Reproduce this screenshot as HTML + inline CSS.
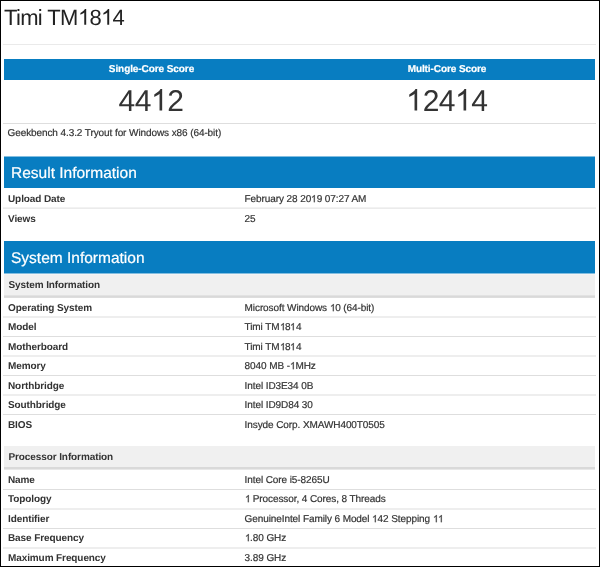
<!DOCTYPE html>
<html><head><meta charset="utf-8"><style>
html,body{margin:0;padding:0;width:600px;height:567px;overflow:hidden;background:#fff}
body{font-family:"Liberation Sans",sans-serif}
#w{position:relative;width:600px;height:567px;will-change:transform}
.t{position:absolute;white-space:nowrap;text-rendering:geometricPrecision}
.s{-webkit-text-stroke:0.2px}
.one{display:inline-block;height:0;position:relative}
.one svg{position:absolute;left:0;bottom:0;overflow:visible;fill:currentColor}
.r{position:absolute}
</style></head><body><div id="w">
<div class="t" style="top:7px;font-size:22px;line-height:22px;color:#222;letter-spacing:-0.62px;left:3.9px;">Timi TM<span class="one" style="width:11.615px"><svg viewBox="0 0 1139 1472" style="width:12.235px;height:15.812px"><path d="M763 1472H583V325Q518 387 412 449Q307 511 223 542V368Q374 297 487 196Q600 95 647 0H763Z"/></svg></span>8<span class="one" style="width:11.615px"><svg viewBox="0 0 1139 1472" style="width:12.235px;height:15.812px"><path d="M763 1472H583V325Q518 387 412 449Q307 511 223 542V368Q374 297 487 196Q600 95 647 0H763Z"/></svg></span>4</div>
<div class="r" style="left:3px;top:44px;width:593px;height:1px;background:rgb(234,234,234)"></div>
<div class="r" style="left:4px;top:59px;width:591px;height:21px;background:rgb(8,125,193)"></div>
<div class="t s" style="top:65px;font-size:10px;line-height:10px;color:#fff;font-weight:bold;letter-spacing:-0.08px;left:1.5px;width:300px;text-align:center;">Single-Core Score</div>
<div class="t s" style="top:65px;font-size:10px;line-height:10px;color:#fff;font-weight:bold;letter-spacing:-0.08px;left:297px;width:300px;text-align:center;">Multi-Core Score</div>
<div class="t" style="top:87px;font-size:30px;line-height:30px;color:#333;letter-spacing:-0.44px;left:1px;width:300px;text-align:center;">44<span class="one" style="width:16.245px"><svg viewBox="0 0 1139 1472" style="width:16.685px;height:21.562px"><path d="M763 1472H583V325Q518 387 412 449Q307 511 223 542V368Q374 297 487 196Q600 95 647 0H763Z"/></svg></span>2</div>
<div class="t" style="top:87px;font-size:30px;line-height:30px;color:#333;letter-spacing:-0.44px;left:297px;width:300px;text-align:center;"><span class="one" style="width:16.245px"><svg viewBox="0 0 1139 1472" style="width:16.685px;height:21.562px"><path d="M763 1472H583V325Q518 387 412 449Q307 511 223 542V368Q374 297 487 196Q600 95 647 0H763Z"/></svg></span>24<span class="one" style="width:16.245px"><svg viewBox="0 0 1139 1472" style="width:16.685px;height:21.562px"><path d="M763 1472H583V325Q518 387 412 449Q307 511 223 542V368Q374 297 487 196Q600 95 647 0H763Z"/></svg></span>4</div>
<div class="r" style="left:3px;top:123px;width:593px;height:1px;background:rgb(222,222,222)"></div>
<div class="t s" style="top:129px;font-size:10px;line-height:10px;color:#333;letter-spacing:-0.09px;left:7.5px;">Geekbench 4.3.2 Tryout for Windows x86 (64-bit)</div>
<div class="r" style="left:4px;top:156px;width:591px;height:1px;background:rgba(8,125,193,0.5)"></div>
<div class="r" style="left:4px;top:157px;width:591px;height:31px;background:rgb(8,125,193)"></div>
<div class="t s" style="top:166px;font-size:15.5px;line-height:15.5px;color:#fff;left:11px;">Result Information</div>
<div class="t" style="top:195px;font-size:10px;line-height:10px;color:#333;font-weight:bold;letter-spacing:-0.1px;left:8px;">Upload Date</div>
<div class="t s" style="top:195px;font-size:10px;line-height:10px;color:#333;letter-spacing:-0.09px;left:244.6px;">February 28 20<span class="one" style="width:5.472px"><svg viewBox="0 0 1139 1472" style="width:5.562px;height:7.188px"><path stroke="currentColor" stroke-width="41.0" d="M763 1472H583V325Q518 387 412 449Q307 511 223 542V368Q374 297 487 196Q600 95 647 0H763Z"/></svg></span>9 07:27 AM</div>
<div class="r" style="left:3px;top:207px;width:593px;height:1px;background:rgba(222,222,222,0.4)"></div>
<div class="r" style="left:3px;top:208px;width:593px;height:1px;background:rgba(222,222,222,0.6)"></div>
<div class="t" style="top:215px;font-size:10px;line-height:10px;color:#333;font-weight:bold;letter-spacing:-0.1px;left:8px;">Views</div>
<div class="t s" style="top:215px;font-size:10px;line-height:10px;color:#333;letter-spacing:-0.09px;left:244.6px;">25</div>
<div class="r" style="left:4px;top:241px;width:591px;height:32px;background:rgb(8,125,193)"></div>
<div class="r" style="left:4px;top:273px;width:591px;height:1px;background:rgba(8,125,193,0.5)"></div>
<div class="t s" style="top:251px;font-size:15.5px;line-height:15.5px;color:#fff;left:11px;">System Information</div>
<div class="r" style="left:4px;top:274px;width:591px;height:1px;background:rgba(240,240,240,0.7)"></div>
<div class="r" style="left:4px;top:275px;width:591px;height:20px;background:rgb(240,240,240)"></div>
<div class="r" style="left:4px;top:295px;width:591px;height:1px;background:rgba(240,240,240,0.3)"></div>
<div class="r" style="left:4px;top:295px;width:591px;height:1px;background:rgba(217,217,217,0.7)"></div>
<div class="r" style="left:4px;top:296px;width:591px;height:1px;background:rgb(217,217,217)"></div>
<div class="r" style="left:4px;top:297px;width:591px;height:1px;background:rgba(217,217,217,0.9)"></div>
<div class="t" style="top:281px;font-size:10px;line-height:10px;color:#333;font-weight:bold;letter-spacing:-0.1px;left:8.5px;">System Information</div>
<div class="t" style="top:304px;font-size:10px;line-height:10px;color:#333;font-weight:bold;letter-spacing:-0.1px;left:8px;">Operating System</div>
<div class="t s" style="top:304px;font-size:10px;line-height:10px;color:#333;letter-spacing:-0.09px;left:244.6px;">Microsoft Windows <span class="one" style="width:5.472px"><svg viewBox="0 0 1139 1472" style="width:5.562px;height:7.188px"><path stroke="currentColor" stroke-width="41.0" d="M763 1472H583V325Q518 387 412 449Q307 511 223 542V368Q374 297 487 196Q600 95 647 0H763Z"/></svg></span>0 (64-bit)</div>
<div class="r" style="left:3px;top:316px;width:593px;height:1px;background:rgba(222,222,222,0.5)"></div>
<div class="r" style="left:3px;top:317px;width:593px;height:1px;background:rgba(222,222,222,0.5)"></div>
<div class="t" style="top:323px;font-size:10px;line-height:10px;color:#333;font-weight:bold;letter-spacing:-0.1px;left:8px;">Model</div>
<div class="t s" style="top:323px;font-size:10px;line-height:10px;color:#333;letter-spacing:-0.09px;left:244.6px;">Timi TM<span class="one" style="width:5.472px"><svg viewBox="0 0 1139 1472" style="width:5.562px;height:7.188px"><path stroke="currentColor" stroke-width="41.0" d="M763 1472H583V325Q518 387 412 449Q307 511 223 542V368Q374 297 487 196Q600 95 647 0H763Z"/></svg></span>8<span class="one" style="width:5.472px"><svg viewBox="0 0 1139 1472" style="width:5.562px;height:7.188px"><path stroke="currentColor" stroke-width="41.0" d="M763 1472H583V325Q518 387 412 449Q307 511 223 542V368Q374 297 487 196Q600 95 647 0H763Z"/></svg></span>4</div>
<div class="r" style="left:3px;top:336px;width:593px;height:1px;background:rgb(222,222,222)"></div>
<div class="t" style="top:343px;font-size:10px;line-height:10px;color:#333;font-weight:bold;letter-spacing:-0.1px;left:8px;">Motherboard</div>
<div class="t s" style="top:343px;font-size:10px;line-height:10px;color:#333;letter-spacing:-0.09px;left:244.6px;">Timi TM<span class="one" style="width:5.472px"><svg viewBox="0 0 1139 1472" style="width:5.562px;height:7.188px"><path stroke="currentColor" stroke-width="41.0" d="M763 1472H583V325Q518 387 412 449Q307 511 223 542V368Q374 297 487 196Q600 95 647 0H763Z"/></svg></span>8<span class="one" style="width:5.472px"><svg viewBox="0 0 1139 1472" style="width:5.562px;height:7.188px"><path stroke="currentColor" stroke-width="41.0" d="M763 1472H583V325Q518 387 412 449Q307 511 223 542V368Q374 297 487 196Q600 95 647 0H763Z"/></svg></span>4</div>
<div class="r" style="left:3px;top:355px;width:593px;height:1px;background:rgba(222,222,222,0.5)"></div>
<div class="r" style="left:3px;top:356px;width:593px;height:1px;background:rgba(222,222,222,0.5)"></div>
<div class="t" style="top:362px;font-size:10px;line-height:10px;color:#333;font-weight:bold;letter-spacing:-0.1px;left:8px;">Memory</div>
<div class="t s" style="top:362px;font-size:10px;line-height:10px;color:#333;letter-spacing:-0.09px;left:244.6px;">8040 MB -<span class="one" style="width:5.472px"><svg viewBox="0 0 1139 1472" style="width:5.562px;height:7.188px"><path stroke="currentColor" stroke-width="41.0" d="M763 1472H583V325Q518 387 412 449Q307 511 223 542V368Q374 297 487 196Q600 95 647 0H763Z"/></svg></span>MHz</div>
<div class="r" style="left:3px;top:375px;width:593px;height:1px;background:rgb(222,222,222)"></div>
<div class="t" style="top:382px;font-size:10px;line-height:10px;color:#333;font-weight:bold;letter-spacing:-0.1px;left:8px;">Northbridge</div>
<div class="t s" style="top:382px;font-size:10px;line-height:10px;color:#333;letter-spacing:-0.09px;left:244.6px;">Intel ID3E34 0B</div>
<div class="r" style="left:3px;top:394px;width:593px;height:1px;background:rgba(222,222,222,0.5)"></div>
<div class="r" style="left:3px;top:395px;width:593px;height:1px;background:rgba(222,222,222,0.5)"></div>
<div class="t" style="top:401px;font-size:10px;line-height:10px;color:#333;font-weight:bold;letter-spacing:-0.1px;left:8px;">Southbridge</div>
<div class="t s" style="top:401px;font-size:10px;line-height:10px;color:#333;letter-spacing:-0.09px;left:244.6px;">Intel ID9D84 30</div>
<div class="r" style="left:3px;top:414px;width:593px;height:1px;background:rgb(222,222,222)"></div>
<div class="t" style="top:421px;font-size:10px;line-height:10px;color:#333;font-weight:bold;letter-spacing:-0.1px;left:8px;">BIOS</div>
<div class="t s" style="top:421px;font-size:10px;line-height:10px;color:#333;letter-spacing:-0.09px;left:244.6px;">Insyde Corp. XMAWH400T0505</div>
<div class="r" style="left:4px;top:446px;width:591px;height:21px;background:rgb(240,240,240)"></div>
<div class="r" style="left:4px;top:467px;width:591px;height:2px;background:rgb(217,217,217)"></div>
<div class="r" style="left:4px;top:469px;width:591px;height:1px;background:rgba(217,217,217,0.6)"></div>
<div class="t" style="top:453px;font-size:10px;line-height:10px;color:#333;font-weight:bold;letter-spacing:-0.1px;left:8.5px;">Processor Information</div>
<div class="t" style="top:476px;font-size:10px;line-height:10px;color:#333;font-weight:bold;letter-spacing:-0.1px;left:8px;">Name</div>
<div class="t s" style="top:476px;font-size:10px;line-height:10px;color:#333;letter-spacing:-0.09px;left:244.6px;">Intel Core i5-8265U</div>
<div class="r" style="left:3px;top:489px;width:593px;height:1px;background:rgb(222,222,222)"></div>
<div class="t" style="top:495px;font-size:10px;line-height:10px;color:#333;font-weight:bold;letter-spacing:-0.1px;left:8px;">Topology</div>
<div class="t s" style="top:495px;font-size:10px;line-height:10px;color:#333;letter-spacing:-0.09px;left:244.6px;"><span class="one" style="width:5.472px"><svg viewBox="0 0 1139 1472" style="width:5.562px;height:7.188px"><path stroke="currentColor" stroke-width="41.0" d="M763 1472H583V325Q518 387 412 449Q307 511 223 542V368Q374 297 487 196Q600 95 647 0H763Z"/></svg></span> Processor, 4 Cores, 8 Threads</div>
<div class="r" style="left:3px;top:508px;width:593px;height:1px;background:rgba(222,222,222,0.5)"></div>
<div class="r" style="left:3px;top:509px;width:593px;height:1px;background:rgba(222,222,222,0.5)"></div>
<div class="t" style="top:515px;font-size:10px;line-height:10px;color:#333;font-weight:bold;letter-spacing:-0.1px;left:8px;">Identifier</div>
<div class="t s" style="top:515px;font-size:10px;line-height:10px;color:#333;letter-spacing:-0.09px;left:244.6px;">GenuineIntel Family 6 Model <span class="one" style="width:5.472px"><svg viewBox="0 0 1139 1472" style="width:5.562px;height:7.188px"><path stroke="currentColor" stroke-width="41.0" d="M763 1472H583V325Q518 387 412 449Q307 511 223 542V368Q374 297 487 196Q600 95 647 0H763Z"/></svg></span>42 Stepping <span class="one" style="width:5.472px"><svg viewBox="0 0 1139 1472" style="width:5.562px;height:7.188px"><path stroke="currentColor" stroke-width="41.0" d="M763 1472H583V325Q518 387 412 449Q307 511 223 542V368Q374 297 487 196Q600 95 647 0H763Z"/></svg></span><span class="one" style="width:5.472px"><svg viewBox="0 0 1139 1472" style="width:5.562px;height:7.188px"><path stroke="currentColor" stroke-width="41.0" d="M763 1472H583V325Q518 387 412 449Q307 511 223 542V368Q374 297 487 196Q600 95 647 0H763Z"/></svg></span></div>
<div class="r" style="left:3px;top:528px;width:593px;height:1px;background:rgb(222,222,222)"></div>
<div class="t" style="top:534px;font-size:10px;line-height:10px;color:#333;font-weight:bold;letter-spacing:-0.1px;left:8px;">Base Frequency</div>
<div class="t s" style="top:534px;font-size:10px;line-height:10px;color:#333;letter-spacing:-0.09px;left:244.6px;"><span class="one" style="width:5.472px"><svg viewBox="0 0 1139 1472" style="width:5.562px;height:7.188px"><path stroke="currentColor" stroke-width="41.0" d="M763 1472H583V325Q518 387 412 449Q307 511 223 542V368Q374 297 487 196Q600 95 647 0H763Z"/></svg></span>.80 GHz</div>
<div class="r" style="left:3px;top:547px;width:593px;height:1px;background:rgba(222,222,222,0.5)"></div>
<div class="r" style="left:3px;top:548px;width:593px;height:1px;background:rgba(222,222,222,0.5)"></div>
<div class="t" style="top:554px;font-size:10px;line-height:10px;color:#333;font-weight:bold;letter-spacing:-0.1px;left:8px;">Maximum Frequency</div>
<div class="t s" style="top:554px;font-size:10px;line-height:10px;color:#333;letter-spacing:-0.09px;left:244.6px;">3.89 GHz</div>
<div class="r" style="left:0px;top:0px;width:600px;height:1px;background:#000"></div>
<div class="r" style="left:0px;top:0px;width:1px;height:567px;background:#000"></div>
<div class="r" style="left:599px;top:0px;width:1px;height:567px;background:#000"></div>
<div class="r" style="left:0px;top:566px;width:600px;height:1px;background:#000"></div>
</div></body></html>
